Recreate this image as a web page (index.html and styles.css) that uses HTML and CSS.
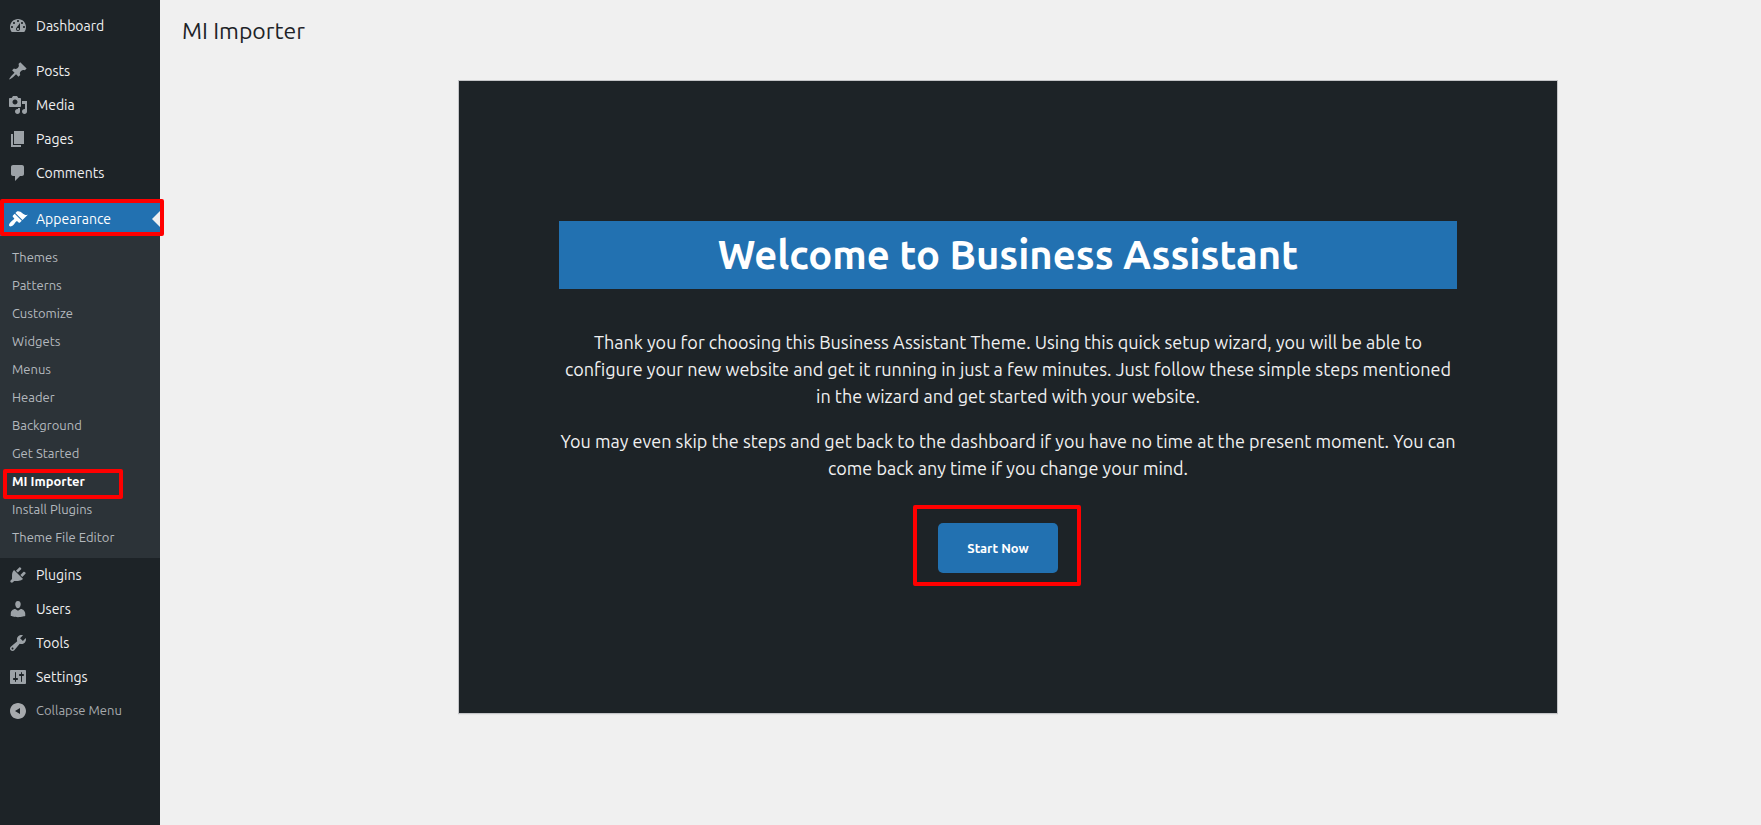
FILE: index.html
```html
<!DOCTYPE html>
<html lang="en">
<head>
    <meta charset="UTF-8">
    <meta name="viewport" content="width=device-width, initial-scale=1.0">
    <title>MI Importer</title>
    <link rel="stylesheet" href="styles.css">
</head>
<body>
    <nav class="sidebar" aria-label="Main menu">
        <ul class="menu">
            <li class="menu-dashboard">
                <a href="#" class="menu-link">
                    <svg class="icon" viewBox="0 0 20 20"><path fill-rule="evenodd" d="M3.76 16h12.48c1.1-1.37 1.76-3.11 1.76-5 0-4.42-3.58-8-8-8s-8 3.58-8 8c0 1.89.66 3.63 1.76 5zM10 4c.55 0 1 .45 1 1s-.45 1-1 1-1-.45-1-1 .45-1 1-1zM6 6c.55 0 1 .45 1 1s-.45 1-1 1-1-.45-1-1 .45-1 1-1zm8 0c.55 0 1 .45 1 1s-.45 1-1 1-1-.45-1-1 .45-1 1-1zm-5.37 5.55L12 7v6c0 1.1-.9 2-2 2s-2-.9-2-2c0-.57.24-1.08.63-1.45zM4 10c.55 0 1 .45 1 1s-.45 1-1 1-1-.45-1-1 .45-1 1-1zm12 0c.55 0 1 .45 1 1s-.45 1-1 1-1-.45-1-1 .45-1 1-1zm-5 3c0-.55-.45-1-1-1s-1 .45-1 1 .45 1 1 1 1-.45 1-1z"/></svg>
                    Dashboard
                </a>
            </li>
            <li>
                <a href="#" class="menu-link">
                    <svg class="icon" viewBox="0 0 20 20"><path d="M10.44 3.02l1.82-1.82 6.36 6.35-1.83 1.82c-1.05-.68-2.48-.57-3.41.36l-.75.75c-.92.93-1.04 2.35-.35 3.41l-1.83 1.82-2.41-2.41-2.8 2.79c-.42.42-3.38 2.71-3.8 2.29s1.86-3.39 2.28-3.81l2.79-2.79L4.1 9.36l1.83-1.82c1.05.69 2.48.57 3.4-.36l.75-.75c.93-.92 1.05-2.35.36-3.41z"/></svg>
                    Posts
                </a>
            </li>
            <li>
                <a href="#" class="menu-link">
                    <svg class="icon" viewBox="0 0 20 20"><path fill-rule="evenodd" d="M13 11V4c0-.55-.45-1-1-1h-1.67L9 1H5L3.67 3H2c-.55 0-1 .45-1 1v7c0 .55.45 1 1 1h10c.55 0 1-.45 1-1zM7 4.5c1.38 0 2.5 1.12 2.5 2.5S8.38 9.5 7 9.5 4.5 8.38 4.5 7 5.62 4.5 7 4.5zM14 6h5v10.5c0 1.38-1.12 2.5-2.5 2.5S14 17.88 14 16.5s1.12-2.5 2.5-2.5c.17 0 .34.02.5.05V9h-3V6zm-4 8.05V13h2v3.5c0 1.38-1.12 2.5-2.5 2.5S7 17.88 7 16.5 8.12 14 9.5 14c.17 0 .34.02.5.05z"/></svg>
                    Media
                </a>
            </li>
            <li>
                <a href="#" class="menu-link">
                    <svg class="icon" viewBox="0 0 20 20"><path d="M6 15V2h10v13H6zm-1 1h8v2H3V5h2v11z"/></svg>
                    Pages
                </a>
            </li>
            <li class="menu-group-end">
                <a href="#" class="menu-link">
                    <svg class="icon" viewBox="0 0 20 20"><path d="M5 2h9c1.1 0 2 .9 2 2v7c0 1.1-.9 2-2 2h-2l-5 5v-5H5c-1.1 0-2-.9-2-2V4c0-1.1.9-2 2-2z"/></svg>
                    Comments
                </a>
            </li>
            <li>
                <a href="#" class="menu-link current">
                    <svg class="icon" viewBox="0 0 20 20"><path d="M14.48 11.06L7.41 3.99l1.5-1.5c.5-.56 2.3-.47 3.51.32 1.21.8 1.43 1.28 2.91 2.1 1.18.64 2.45 1.26 4.45.85zm-.71.71L6.7 4.7 4.93 6.47c-.39.39-.39 1.02 0 1.41l1.06 1.06c.39.39.39 1.03 0 1.42-.6.6-1.43 1.11-2.21 1.69-.35.26-.7.53-1.01.84C1.43 14.23.4 16.08 1.4 17.07c.99 1 2.84-.03 4.18-1.36.31-.31.58-.66.85-1.02.57-.78 1.08-1.61 1.69-2.21.39-.39 1.02-.39 1.41 0l1.06 1.06c.39.39 1.02.39 1.41 0z"/></svg>
                    Appearance
                    <span class="highlight highlight-menu"></span>
                </a>
                <ul class="submenu">
                    <li><a href="#">Themes</a></li>
                    <li><a href="#">Patterns</a></li>
                    <li><a href="#">Customize</a></li>
                    <li><a href="#">Widgets</a></li>
                    <li><a href="#">Menus</a></li>
                    <li><a href="#">Header</a></li>
                    <li><a href="#">Background</a></li>
                    <li><a href="#">Get Started</a></li>
                    <li><a href="#" class="active">MI Importer<span class="highlight highlight-submenu"></span></a></li>
                    <li><a href="#">Install Plugins</a></li>
                    <li><a href="#">Theme File Editor</a></li>
                </ul>
            </li>
            <li>
                <a href="#" class="menu-link">
                    <svg class="icon" viewBox="0 0 20 20"><path d="M13.11 4.36L9.87 7.6 8 5.73l3.24-3.24c.35-.34 1.05-.2 1.56.32.52.51.66 1.21.31 1.55zm-8 1.77l.91-1.12 9.01 9.01-1.19.84c-.71.71-2.63 1.16-3.82 1.16H6.14L4.9 17.26c-.59.59-1.54.59-2.12 0-.59-.58-.59-1.53 0-2.12l1.24-1.24v-3.88c0-1.13.4-3.19 1.09-3.89zm7.26 3.97l3.24-3.24c.34-.35 1.04-.21 1.55.31.52.51.66 1.21.31 1.55l-3.24 3.25z"/></svg>
                    Plugins
                </a>
            </li>
            <li>
                <a href="#" class="menu-link">
                    <svg class="icon" viewBox="0 0 20 20"><path d="M10 9.25c-2.27 0-2.73-3.44-2.73-3.44C7 4.02 7.82 2 9.97 2c2.16 0 2.98 2.02 2.71 3.81 0 0-.41 3.44-2.68 3.44zm0 2.57L12.72 10c2.39 0 4.52 2.33 4.52 4.53v2.49s-3.65 1.13-7.24 1.13c-3.65 0-7.24-1.13-7.24-1.13v-2.49c0-2.25 1.94-4.48 4.47-4.48z"/></svg>
                    Users
                </a>
            </li>
            <li>
                <a href="#" class="menu-link">
                    <svg class="icon" viewBox="0 0 20 20"><path fill-rule="evenodd" d="M16.68 9.77c-1.34 1.34-3.3 1.67-4.95.99l-5.41 6.52c-.99.99-2.59.99-3.58 0s-.99-2.59 0-3.57l6.52-5.42c-.68-1.65-.35-3.61.99-4.95 1.28-1.28 3.12-1.62 4.72-1.06l-2.89 2.89 2.82 2.82 2.86-2.87c.53 1.58.18 3.39-1.08 4.65zM3.81 16.21c.4.39 1.04.39 1.43 0 .4-.4.4-1.04 0-1.43-.39-.4-1.03-.4-1.43 0-.39.39-.39 1.03 0 1.43z"/></svg>
                    Tools
                </a>
            </li>
            <li>
                <a href="#" class="menu-link">
                    <svg class="icon" viewBox="0 0 20 20"><path fill-rule="evenodd" d="M18 16V4c0-.55-.45-1-1-1H3c-.55 0-1 .45-1 1v12c0 .55.45 1 1 1h14c.55 0 1-.45 1-1zM8 11h1c.55 0 1 .45 1 1s-.45 1-1 1H8v1.500c0 .28-.22.5-.5.5s-.5-.22-.5-.5V13H6c-.55 0-1-.45-1-1s.45-1 1-1h1V5.500c0-.28.22-.5.5-.5s.5.22.5.5V11zm5-2h-1c-.55 0-1-.45-1-1s.45-1 1-1h1V5.500c0-.28.22-.5.5-.5s.5.22.5.5V7h1c.55 0 1 .45 1 1s-.45 1-1 1h-1v5.500c0 .28-.22.5-.5.5s-.5-.22-.5-.5V9z"/></svg>
                    Settings
                </a>
            </li>
            <li>
                <button type="button" class="menu-link collapse">
                    <svg class="icon" viewBox="0 0 20 20"><path fill-rule="evenodd" d="M10 2c4.42 0 8 3.58 8 8s-3.58 8-8 8-8-3.58-8-8 3.58-8 8-8zm2 11V7l-5 3z"/></svg>
                    Collapse Menu
                </button>
            </li>
        </ul>
    </nav>

    <main class="content">
        <h1>MI Importer</h1>

        <section class="wizard">
            <h2>Welcome to Business Assistant</h2>
            <p>Thank you for choosing this Business Assistant Theme. Using this quick setup wizard, you will be able to configure your new website and get it running in just a few minutes. Just follow these simple steps mentioned in the wizard and get started with your website.</p>
            <p>You may even skip the steps and get back to the dashboard if you have no time at the present moment. You can come back any time if you change your mind.</p>
            <div class="wizard-actions">
                <button type="button" class="start-button">Start Now<span class="highlight highlight-start"></span></button>
            </div>
        </section>
    </main>
</body>
</html>
```
FILE: styles.css
```css
* {
    box-sizing: border-box;
}
body {
    margin: 0;
    display: flex;
    min-height: 100vh;
    background: #f0f0f0;
    color: #1d2327;
    font-family: Ubuntu, "Noto Sans", "Open Sans", sans-serif;
    font-size: 13px;
}
ul {
    list-style: none;
    margin: 0;
    padding: 0;
}

/* Sidebar */
.sidebar {
    flex: 0 0 160px;
    background: #1d2327;
}
.menu {
    padding-top: 9px;
}
.menu-dashboard {
    margin-bottom: 11px;
}
.menu-group-end {
    margin-bottom: 12px;
}
.menu-link {
    position: relative;
    display: flex;
    align-items: flex-start;
    gap: 8px;
    width: 100%;
    height: 34px;
    padding: 0 8px;
    color: #f0f0f1;
    font-size: 14px;
    line-height: 34px;
    text-decoration: none;
}
.icon {
    flex: none;
    width: 20px;
    height: 20px;
    margin-top: 7px;
    fill: #9ca2a7;
}
.current {
    background: #2271b1;
    color: #fff;
}
.current .icon {
    fill: #fff;
}
.current::after {
    content: "";
    position: absolute;
    top: 9px;
    right: 0;
    border: 8px solid transparent;
    border-left-width: 0;
    border-right-color: #f0f0f0;
}
.submenu {
    padding: 7px 0;
    background: #2c3338;
}
.submenu a {
    position: relative;
    display: block;
    padding: 0 12px;
    color: #b4b9be;
    line-height: 28px;
    text-decoration: none;
}
.submenu .active {
    color: #fff;
    font-weight: 600;
}
.collapse {
    border: 0;
    background: none;
    color: #a7aaad;
    font-family: inherit;
    font-size: 13px;
    line-height: 32px;
    cursor: pointer;
}
.collapse .icon {
    fill: #a7aaad;
}

/* Page */
.content {
    flex: 1;
    padding: 10px 20px 0 22px;
}
h1 {
    margin: 0 0 28px;
    font-size: 23px;
    font-weight: 400;
    line-height: 42px;
}
.wizard {
    margin: 0 183px 0 276px;
    padding: 140px 100px;
    border: 1px solid #c3c4c7;
    box-shadow: 0 1px 1px rgba(0, 0, 0, 0.04);
    background: #1d2327;
    color: #f0f0f1;
    text-align: center;
}
.wizard h2 {
    margin: 0 0 40px;
    background: #2271b1;
    color: #fff;
    font-size: 40px;
    font-weight: 600;
    line-height: 68px;
}
.wizard p {
    margin: 0 0 18px;
    font-size: 18px;
    line-height: 27px;
}
.wizard-actions {
    display: flex;
    justify-content: center;
    margin-top: 41px;
    padding-right: 20px;
}
.start-button {
    position: relative;
    width: 120px;
    height: 50px;
    padding: 0;
    border: 0;
    border-radius: 5px;
    background: #2271b1;
    color: #fff;
    font-family: inherit;
    font-size: 13px;
    font-weight: 600;
    cursor: pointer;
}

/* Red marker boxes over the steps to follow */
.highlight {
    position: absolute;
    z-index: 1;
    border: 4px solid #f00;
    border-radius: 2px;
    pointer-events: none;
}
.highlight-menu {
    top: -3px;
    left: 0;
    width: 164px;
    height: 37px;
}
.highlight-submenu {
    top: 2px;
    left: 3px;
    width: 120px;
    height: 30px;
}
.highlight-start {
    top: -18px;
    left: -25px;
    width: 168px;
    height: 81px;
}
```
